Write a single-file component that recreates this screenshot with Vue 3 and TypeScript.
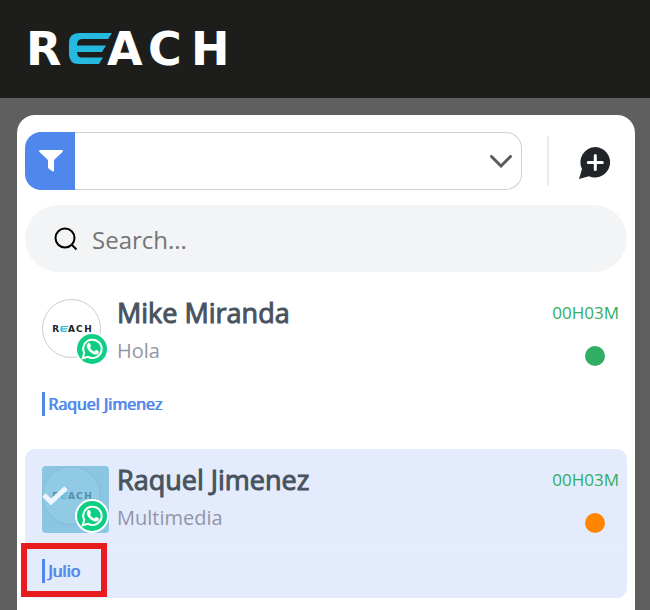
<script setup lang="ts">
import { ref } from 'vue'

interface Contact {
  id: number
  name: string
  message: string
  elapsed: string
  agent: string
  status: 'online' | 'pending'
  selected: boolean
}

const filter = ref('')
const search = ref('')
const contacts = ref<Contact[]>([
  { id: 1, name: 'Mike Miranda', message: 'Hola', elapsed: '00H03M', agent: 'Raquel Jimenez', status: 'online', selected: false },
  { id: 2, name: 'Raquel Jimenez', message: 'Multimedia', elapsed: '00H03M', agent: 'Julio', status: 'pending', selected: true },
])
</script>

<template>
  <header class="topbar">
    <svg class="logo" viewBox="0 0 216 60" role="img" aria-label="REACH">
      <g class="logo-text">
        <text x="6" y="46">R</text>
        <text x="87" y="46">A</text>
        <text x="128" y="46">C</text>
        <text x="171" y="46">H</text>
      </g>
      <path class="logo-mark" d="M59 14H92L88 20H62Q57 20 57 26.500H86L82 33H57Q57 38.500 62 38.500H83L79 45H59Q49 45 49 35V24Q49 14 59 14Z" />
    </svg>
  </header>

  <main class="panel">
    <div class="toolbar">
      <div class="filter">
        <label class="filter-icon" for="filter" aria-label="Filter">
          <svg viewBox="0 0 24 22"><path d="M1 0H23Q24.500 .5 23.500 2L15 10V20.500Q15 22 13.500 21.300L10 19Q9 18 9 17V10L.5 2Q-.5 .5 1 0Z" /></svg>
        </label>
        <select id="filter" v-model="filter"><option value=""></option></select>
        <svg class="chevron" viewBox="0 0 22 13"><path d="M1.500 1.500L11 11L20.500 1.500" /></svg>
      </div>
      <span class="divider"></span>
      <button class="new-chat" type="button" aria-label="New chat">
        <svg viewBox="0 0 32 32">
          <path class="bubble" d="M16.500 0A15.200 15.200 0 1 1 10 29.200L0 32L3 22A15.200 15.200 0 0 1 16.500 0Z" />
          <path class="plus" d="M16.300 8.500V22.500M9.300 15.500H23.300" />
        </svg>
      </button>
    </div>

    <label class="search">
      <svg viewBox="0 0 24 24"><circle cx="11" cy="11" r="9.500" /><path d="M17.500 17.500L22.500 22.500" /></svg>
      <input v-model="search" type="text" placeholder="Search..." aria-label="Search" />
    </label>

    <ul class="contacts">
      <li v-for="c in contacts" :key="c.id" class="contact" :class="{ selected: c.selected }">
        <div class="summary">
          <div class="avatar">
            <div class="picture">
              <svg viewBox="0 0 216 60" role="img" aria-label="REACH">
                <g class="logo-text">
                  <text x="6" y="46">R</text>
                  <text x="87" y="46">A</text>
                  <text x="128" y="46">C</text>
                  <text x="171" y="46">H</text>
                </g>
                <path class="logo-mark" d="M59 14H92L88 20H62Q57 20 57 26.500H86L82 33H57Q57 38.500 62 38.500H83L79 45H59Q49 45 49 35V24Q49 14 59 14Z" />
              </svg>
            </div>
            <div v-if="c.selected" class="overlay">
              <svg viewBox="0 0 26 19"><path d="M2 9L9 16L24 2" /></svg>
            </div>
            <svg class="whatsapp" viewBox="0 0 34 34">
              <circle class="ring" cx="17" cy="17" r="17" />
              <circle class="disc" cx="17" cy="17" r="15" />
              <path class="outline" d="M7.700 26.300L9.200 20.900A9.200 9.200 0 1 1 13 24.900Z" />
              <path class="phone" d="M13.300 11.200C13.900 10.700 14.700 10.800 15 11.500L15.900 13.500C16.100 14.100 15.900 14.500 15 15.500C16 17.500 17.300 18.700 19.300 19.500L20.500 18.200C20.800 17.900 21.100 17.900 21.500 18.100L23.600 19.200C24 19.400 24.100 19.700 23.900 20.400C23.500 21.900 22 22.700 20.500 22.500C16.500 22 12.200 17.900 11.800 14.500C11.700 13.100 12.300 11.900 13.300 11.200Z" />
            </svg>
          </div>
          <div class="details">
            <h2>{{ c.name }}</h2>
            <p>{{ c.message }}</p>
          </div>
          <div class="meta">
            <time>{{ c.elapsed }}</time>
            <span class="status" :class="c.status"></span>
          </div>
        </div>
        <div class="assigned">
          <span class="agent">{{ c.agent }}</span>
          <span v-if="c.selected" class="highlight"></span>
        </div>
      </li>
    </ul>
  </main>
</template>

<style>
body {
  background: #5f5f5f;
}
</style>

<style scoped>
.topbar,
.panel {
  font-family: "Open Sans", "Noto Sans", sans-serif;
  box-sizing: border-box;
}

.topbar {
  display: flex;
  align-items: center;
  height: 98px;
  padding: 0 20px;
  background: #1d1d1b;
}

.logo {
  width: 216px;
  height: 60px;
}

.logo-text {
  fill: #fff;
  font: bold 46px "DejaVu Sans", sans-serif;
}

.logo-mark {
  fill: #26b9df;
}

.panel {
  margin: 17px 15px 0 17px;
  padding: 17px 8px 12px;
  border-radius: 18px 18px 0 0;
  background: #fff;
}

.toolbar {
  display: flex;
  align-items: center;
}

.filter {
  position: relative;
  display: flex;
  flex: 1;
  height: 58px;
}

.filter-icon {
  display: flex;
  align-items: center;
  justify-content: center;
  width: 50px;
  border-radius: 16px 0 0 16px;
  background: #4f87ec;
}

.filter-icon svg {
  width: 24px;
  height: 22px;
  margin-left: 2px;
  fill: #fff;
}

.filter select {
  flex: 1;
  min-width: 0;
  appearance: none;
  border: 1px solid #d0d0d0;
  border-left: 0;
  border-radius: 0 16px 16px 0;
  background: #fff;
  font: inherit;
}

.chevron {
  position: absolute;
  top: 23px;
  right: 10px;
  width: 22px;
  height: 13px;
  fill: none;
  stroke: #5c5c5c;
  stroke-width: 3;
  stroke-linecap: round;
  pointer-events: none;
}

.divider {
  width: 2px;
  height: 50px;
  margin: 0 30px 0 25px;
  background: #ececec;
}

.new-chat {
  display: flex;
  margin-right: 16px;
  padding: 3px 0 0;
  border: 0;
  background: none;
}

.new-chat svg {
  width: 32px;
  height: 32px;
}

.bubble {
  fill: #212529;
}

.plus {
  fill: none;
  stroke: #fff;
  stroke-width: 3;
  stroke-linecap: round;
}

.search {
  display: flex;
  align-items: center;
  gap: 14px;
  height: 67px;
  margin-top: 15px;
  padding: 0 29px;
  border-radius: 34px;
  background: #f2f4f6;
}

.search svg {
  width: 24px;
  height: 24px;
  fill: none;
  stroke: #000;
  stroke-width: 2;
}

.search input {
  flex: 1;
  min-width: 0;
  padding: 2px 0 0;
  border: 0;
  outline: 0;
  background: none;
  color: #333;
  font: 24px "Open Sans", "Noto Sans", sans-serif;
}

.search input::placeholder {
  color: #757575;
}

.contacts {
  display: grid;
  gap: 18px;
  margin: 10px 0 0;
  padding: 0;
  list-style: none;
}

.contact {
  border-radius: 10px;
}

.selected {
  background: #e4ebfd;
}

.summary {
  display: flex;
  gap: 8px;
  height: 98px;
  padding: 0 8px 0 17px;
  border-bottom: 1px solid transparent;
}

.selected .summary {
  border-color: #e9effd;
}

.avatar {
  position: relative;
  width: 67px;
  height: 67px;
  margin-top: 17px;
}

.picture {
  display: flex;
  align-items: center;
  justify-content: center;
  box-sizing: border-box;
  width: 59px;
  height: 59px;
  border: 1px solid #ccc;
  border-radius: 50%;
  background: #fff;
}

.picture svg {
  width: 42px;
  height: 12px;
}

.picture .logo-text {
  fill: #222;
}

.overlay {
  position: absolute;
  inset: 0;
  padding-top: 20px;
  box-sizing: border-box;
  border-radius: 4px;
  background: rgb(102 182 217 / 72%);
}

.overlay svg {
  display: block;
  width: 26px;
  height: 19px;
  fill: none;
  stroke: #eff5fc;
  stroke-width: 5;
}

.whatsapp {
  position: absolute;
  right: 0;
  bottom: 0;
  width: 34px;
  height: 34px;
}

.ring {
  fill: #fff;
}

.disc {
  fill: #0ccf83;
}

.outline {
  fill: none;
  stroke: #fff;
  stroke-width: 2;
}

.phone {
  fill: #fff;
}

.details {
  flex: 1;
  min-width: 0;
}

.details h2 {
  margin: 11px 0 0;
  color: #48535f;
  font-size: 27px;
  font-weight: 400;
  line-height: 40px;
  -webkit-text-stroke: 1px #48535f;
}

.details p {
  margin: 4px 0 0;
  color: #9395a9;
  font-size: 20px;
  line-height: 28px;
}

.meta {
  display: flex;
  flex-direction: column;
  align-items: flex-end;
}

.meta time {
  margin-top: 19px;
  color: #31ad64;
  font-size: 17px;
  line-height: 24px;
}

.status {
  width: 20px;
  height: 20px;
  margin: 21px 14px 0 0;
  border-radius: 50%;
}

.online {
  background: #31ad64;
}

.pending {
  background: #ff8503;
}

.assigned {
  position: relative;
  height: 50px;
  box-sizing: border-box;
  padding: 11px 17px 0;
}

.agent {
  display: block;
  width: fit-content;
  padding-left: 3px;
  border-left: 3px solid #4f87ec;
  color: #4f87ec;
  font-size: 16px;
  line-height: 24px;
  text-shadow: 1px 0 #4f87ec;
}

.highlight {
  position: absolute;
  top: -5px;
  left: -4px;
  box-sizing: border-box;
  width: 86px;
  height: 54px;
  border: 6px solid #e81c1e;
}
</style>
